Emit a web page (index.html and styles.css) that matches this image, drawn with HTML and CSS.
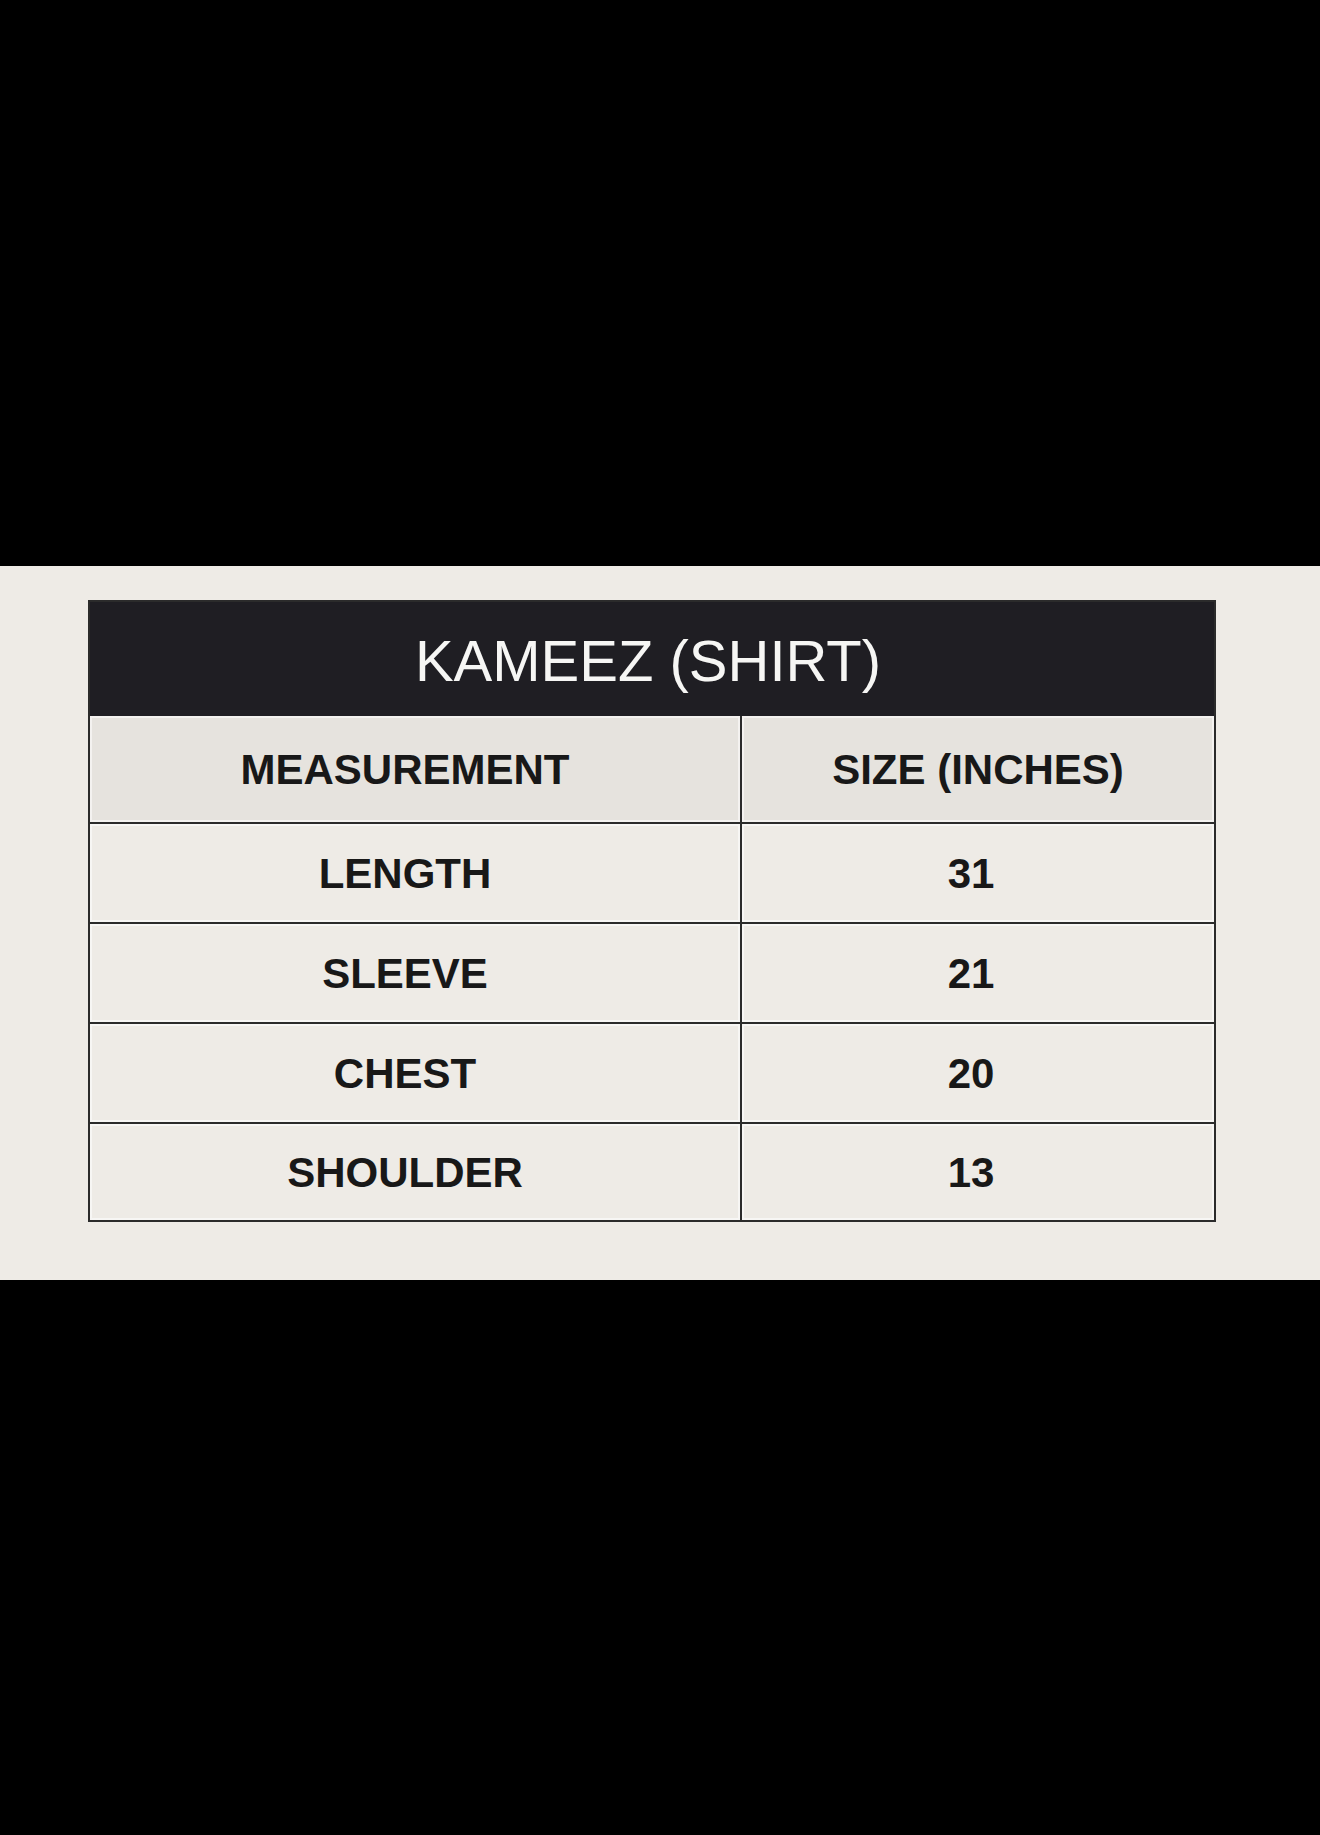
FILE: index.html
```html
<!DOCTYPE html>
<html lang="en">
<head>
<meta charset="utf-8">
<title>Kameez (Shirt) Size Chart</title>
<link rel="stylesheet" href="styles.css">
</head>
<body>
<div class="top-black"></div>
<section class="band">
  <div class="chart">
    <div class="chart-title">KAMEEZ (SHIRT)</div>
    <div class="row head">
      <div class="cell">MEASUREMENT</div>
      <div class="cell right">SIZE (INCHES)</div>
    </div>
    <div class="row">
      <div class="cell">LENGTH</div>
      <div class="cell right">31</div>
    </div>
    <div class="row">
      <div class="cell">SLEEVE</div>
      <div class="cell right">21</div>
    </div>
    <div class="row">
      <div class="cell">CHEST</div>
      <div class="cell right">20</div>
    </div>
    <div class="row last">
      <div class="cell">SHOULDER</div>
      <div class="cell right">13</div>
    </div>
  </div>
</section>
<div class="bottom-black"></div>
</body>
</html>
```
FILE: styles.css
```css
html, body {
  margin: 0;
  padding: 0;
  background: #000;
}
body {
  width: 1320px;
  min-height: 1835px;
  font-family: "Liberation Sans", Arial, sans-serif;
}
.top-black {
  height: 566px;
  background: #000;
}
.band {
  height: 714px;
  box-sizing: border-box;
  padding: 34px 0 0 88px;
  background: #eeebe6;
}
.chart {
  width: 1128px;
  box-sizing: border-box;
  border: 2px solid #2b2b2b;
  background: #eeebe6;
}
.chart-title {
  height: 114px;
  display: flex;
  align-items: center;
  justify-content: center;
  background: #1f1e23;
  color: #f6f6f4;
  font-size: 58px;
  font-weight: 400;
  padding: 2px 8px 0 0;
  box-sizing: border-box;
}
.row {
  display: grid;
  grid-template-columns: 650px 1fr;
  height: 100px;
  box-sizing: border-box;
  border-top: 2px solid #2b2b2b;
}
.row.head {
  height: 106px;
  border-top: none;
  background: #e6e3de;
}
.row.last {
  height: 98px;
}
.cell {
  display: flex;
  align-items: center;
  justify-content: center;
  font-size: 42px;
  font-weight: 700;
  color: #181818;
  box-shadow: inset 0 0 0 2px rgba(255, 255, 255, 0.55);
  padding: 2px 20px 0 0;
  box-sizing: border-box;
}
.cell.right {
  border-left: 2px solid #2b2b2b;
  padding-right: 14px;
}
.row.head .cell.right {
  padding-right: 0;
}
.bottom-black {
  height: 555px;
  background: #000;
}
```
